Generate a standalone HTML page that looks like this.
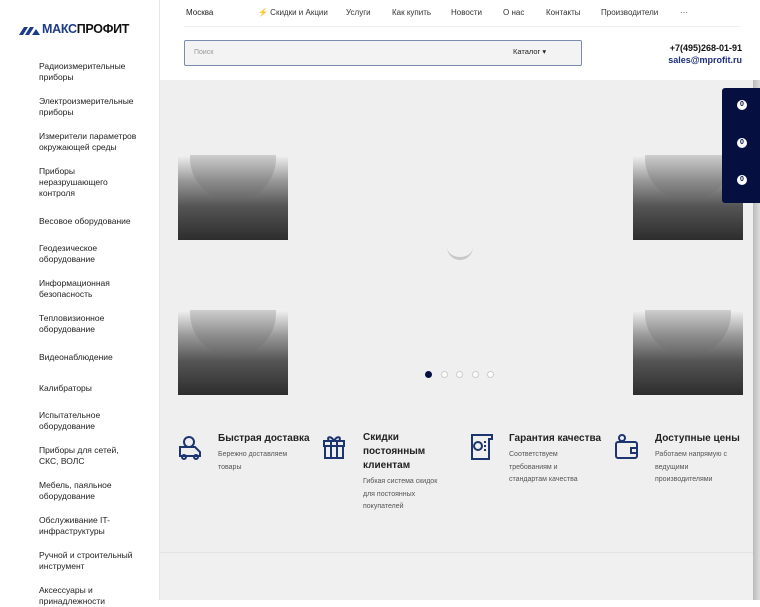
<!DOCTYPE html>
<html><head><meta charset="utf-8"><style>
*{margin:0;padding:0;box-sizing:border-box}
body{width:760px;height:600px;overflow:hidden;background:#fff;font-family:"Liberation Sans",sans-serif;color:#222;position:relative}
.side{position:absolute;left:0;top:0;width:160px;height:600px;background:#fff;border-right:1px solid #e6e6e6}
.logo{position:absolute;left:42px;top:22px;font-weight:bold;font-size:12.5px;color:#111;letter-spacing:-0.3px}
.logo b{color:#1c3b8a}
.menu div{position:absolute;left:39px;font-size:8.5px;line-height:11px;color:#222;width:98px}
.main{position:absolute;left:160px;top:80px;width:593px;height:520px;background:#efefef}
.hdr{position:absolute;left:160px;top:0;width:593px;height:80px;background:#fff}
.nav span{position:absolute;top:8px;font-size:8px;color:#333}
.navline{position:absolute;left:184px;top:26px;width:556px;height:1px;background:#eee}
.search{position:absolute;left:184px;top:40px;width:398px;height:26px;border:1px solid #7a8ab0;border-radius:2px;background:#f3f3f3}
.img{position:absolute;width:110px;height:85px;background:linear-gradient(#f2f2f2,#999 30%,#555 60%,#2d2d2d);overflow:hidden}
.img::after{content:"";position:absolute;left:12px;top:-40px;width:86px;height:86px;border-radius:50%;background:linear-gradient(#ddd,#888 50%,#666);opacity:.35}
.panel{position:absolute;left:722px;top:88px;width:38px;height:115px;background:#061040;border-radius:3px 0 0 3px}
.panel span{position:absolute;left:15px;width:10px;height:10px;border-radius:50%;background:#fff;color:#061040;font-size:7px;font-weight:bold;text-align:center;line-height:10px}
.dot{position:absolute;top:371px;width:7px;height:7px;border-radius:50%;border:1px solid #ccc;background:#fff}
.f h4{position:absolute;font-size:10px;font-weight:bold;line-height:14px;color:#222}
.f p{position:absolute;font-size:7px;line-height:12.5px;color:#555}
.ic{position:absolute}
</style></head><body>
<div class="side">
<svg style="position:absolute;left:19px;top:25px" width="21" height="10" viewBox="0 0 21 10"><path d="M0 10L5 2h4l-5 8zM6 10l5-8h4l-5 8zM13 10l4-6 4 6z" fill="#1c3b8a"/></svg>
<div class="logo"><b>МАКС</b>ПРОФИТ</div>
<div class="menu">
<div style="top:61px">Радиоизмерительные приборы</div>
<div style="top:96px">Электроизмерительные приборы</div>
<div style="top:131px;width:100px">Измерители параметров окружающей среды</div>
<div style="top:166px;width:70px">Приборы неразрушающего контроля</div>
<div style="top:216px">Весовое оборудование</div>
<div style="top:243px">Геодезическое оборудование</div>
<div style="top:278px">Информационная безопасность</div>
<div style="top:313px">Тепловизионное оборудование</div>
<div style="top:352px">Видеонаблюдение</div>
<div style="top:383px">Калибраторы</div>
<div style="top:410px">Испытательное оборудование</div>
<div style="top:445px;width:80px">Приборы для сетей, СКС, ВОЛС</div>
<div style="top:480px">Мебель, паяльное оборудование</div>
<div style="top:515px;width:75px">Обслуживание IT-инфраструктуры</div>
<div style="top:550px">Ручной и строительный инструмент</div>
<div style="top:585px">Аксессуары и принадлежности</div>
</div></div>
<div class="hdr"></div>
<div class="nav">
<span style="left:186px;color:#222">Москва</span>
<span style="left:258px">⚡ Скидки и Акции</span>
<span style="left:346px">Услуги</span>
<span style="left:392px">Как купить</span>
<span style="left:451px">Новости</span>
<span style="left:503px">О нас</span>
<span style="left:546px">Контакты</span>
<span style="left:601px">Производители</span>
<span style="left:680px">···</span>
</div>
<div class="navline"></div>
<div class="search"><span style="position:absolute;left:9px;top:8px;font-size:7px;color:#999">Поиск</span><span style="position:absolute;left:328px;top:6px;font-size:7.5px;color:#222">Каталог ▾</span></div>
<div style="position:absolute;right:18px;top:43px;font-size:9px;font-weight:bold;color:#111">+7(495)268-01-91</div>
<div style="position:absolute;right:18px;top:55px;font-size:9px;font-weight:bold;color:#1c2f7a">sales@mprofit.ru</div>
<div class="main"></div>
<div style="position:absolute;left:753px;top:80px;width:7px;height:520px;background:linear-gradient(90deg,#bbb,#ddd)"></div>
<div class="img" style="left:178px;top:155px"></div>
<div class="img" style="left:178px;top:310px"></div>
<div class="img" style="left:633px;top:155px"></div>
<div class="img" style="left:633px;top:310px"></div>
<div style="position:absolute;left:447px;top:240px;width:26px;height:20px;border-bottom:3px solid #c8c8c8;border-radius:0 0 13px 13px"></div>
<div class="panel"><span style="top:12px">0</span><span style="top:50px">0</span><span style="top:87px">0</span></div>
<div class="dot" style="left:425px;background:#061040;border-color:#061040"></div>
<div class="dot" style="left:441px"></div><div class="dot" style="left:456px"></div><div class="dot" style="left:472px"></div><div class="dot" style="left:487px"></div>
<div class="f">
<svg class="ic" style="left:178px;top:435px" width="24" height="25" viewBox="0 0 24 25" fill="none" stroke="#1c3570" stroke-width="2"><circle cx="11" cy="7" r="5"/><path d="M2 12h15l5 5v4H2z"/><circle cx="6" cy="22" r="2"/><circle cx="18" cy="22" r="2"/></svg>
<h4 style="left:218px;top:432px">Быстрая доставка</h4>
<p style="left:218px;top:449px">Бережно доставляем<br>товары</p>
<svg class="ic" style="left:323px;top:434px" width="22" height="25" viewBox="0 0 22 25" fill="none" stroke="#1c3570" stroke-width="2"><rect x="1" y="7" width="20" height="5"/><rect x="2" y="12" width="18" height="12"/><path d="M8 7v17M14 7v17M11 7c-3-6-8-4-5 0M11 7c3-6 8-4 5 0"/></svg>
<h4 style="left:363px;top:431px">Скидки<br>постоянным<br>клиентам</h4>
<p style="left:363px;top:476px">Гибкая система скидок<br>для постоянных<br>покупателей</p>
<svg class="ic" style="left:469px;top:434px" width="24" height="26" viewBox="0 0 24 26" fill="none" stroke="#1c3570" stroke-width="2"><path d="M3 1h20v4h-3v20H3z"/><circle cx="9" cy="12" r="4"/><path d="M15 8h2M15 12h2M15 16h2"/></svg>
<h4 style="left:509px;top:432px">Гарантия качества</h4>
<p style="left:509px;top:449px">Соответствуем<br>требованиям и<br>стандартам качества</p>
<svg class="ic" style="left:615px;top:434px" width="24" height="26" viewBox="0 0 24 26" fill="none" stroke="#1c3570" stroke-width="2"><circle cx="7" cy="4" r="3"/><rect x="1" y="8" width="21" height="16" rx="2"/><path d="M16 14h6v5h-6z"/></svg>
<h4 style="left:655px;top:432px">Доступные цены</h4>
<p style="left:655px;top:449px">Работаем напрямую с<br>ведущими<br>производителями</p>
</div>
<div style="position:absolute;left:160px;top:552px;width:593px;height:1px;background:#e3e3e3"></div>
<div style="position:absolute;left:160px;top:553px;width:593px;height:47px;background:#f0f0f0"></div>
</body></html>
